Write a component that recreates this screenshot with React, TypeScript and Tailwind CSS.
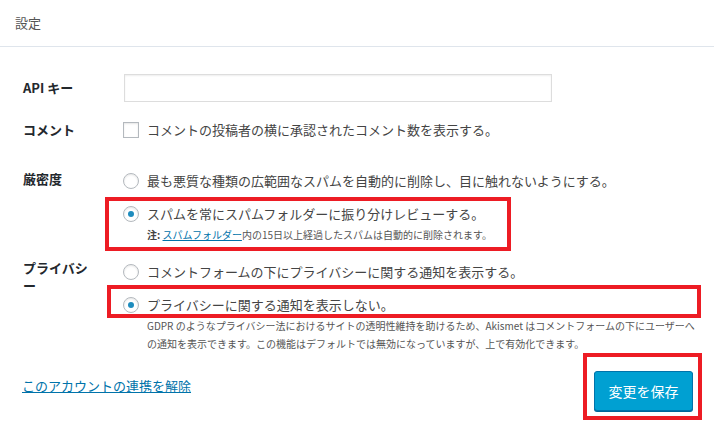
import React from "react";

const Radio = ({ checked = false }: { checked?: boolean }) => (
  <span className="w-4 h-4 shrink-0 rounded-full border border-[#b4b9be] bg-white shadow-[inset_0_1px_2px_rgba(0,0,0,0.1)] flex items-center justify-center">
    {checked && <span className="w-[6px] h-[6px] rounded-full bg-[#1e8cbe]" />}
  </span>
);

const App = () => {
  return (
    <div className="w-[714px] h-[431px] overflow-hidden bg-white text-[13px] text-[#444] font-['Noto_Sans_CJK_JP','Noto_Sans',sans-serif]">
      {/* Header */}
      <div className="h-[47px] border-b border-[#dfe5ec] px-[15px] flex items-center text-[#555]">
        設定
      </div>

      <div className="pl-[23px]">
        {/* API key */}
        <div className="flex items-center mt-[27px]">
          <div className="w-[101px] font-bold text-[#23282d]">API キー</div>
          <div className="w-[428px] h-[28px] border border-[#ddd] bg-white shadow-[inset_0_1px_2px_rgba(0,0,0,0.07)]" />
        </div>

        {/* Comment */}
        <div className="flex items-center mt-[20px] h-4">
          <div className="w-[100px] font-bold text-[#23282d]">コメント</div>
          <span className="w-4 h-4 shrink-0 border border-[#b4b9be] bg-white shadow-[inset_0_1px_2px_rgba(0,0,0,0.1)]" />
          <span className="ml-[8px] leading-4">コメントの投稿者の横に承認されたコメント数を表示する。</span>
        </div>

        {/* Strictness */}
        <div className="flex items-start mt-[35px]">
          <div className="w-[100px] font-bold text-[#23282d] leading-4 -mt-[2px]">厳密度</div>
          <div className="flex flex-col">
            <div className="flex items-center h-4">
              <Radio />
              <span className="ml-[8px] leading-4">最も悪質な種類の広範囲なスパムを自動的に削除し、目に触れないようにする。</span>
            </div>
            <div className="mt-[8px] -ml-[18px] w-[406px] border-4 border-[#ed1c24] pl-[14px] pt-[5px] pb-[5px]">
              <div className="flex items-center h-4">
                <Radio checked />
                <span className="ml-[8px] leading-4">スパムを常にスパムフォルダーに振り分けレビューする。</span>
              </div>
              <div className="mt-[6px] pl-[24px] text-[10px] leading-[14px] text-[#555]">
                <span className="font-bold text-[#444]">注:</span>{" "}
                <span className="text-[#0073aa] underline">スパムフォルダー</span>
                内の15日以上経過したスパムは自動的に削除されます。
              </div>
            </div>
          </div>
        </div>

        {/* Privacy */}
        <div className="flex items-start mt-[13px]">
          <div className="w-[100px] font-bold text-[#23282d] leading-[18px] -mt-[5px]">
            プライバシ
            <br />ー
          </div>
          <div className="flex flex-col">
            <div className="flex items-center h-4">
              <Radio />
              <span className="ml-[8px] leading-4">コメントフォームの下にプライバシーに関する通知を表示する。</span>
            </div>
            <div className="mt-[5px] -ml-[16px] w-[594px] border-4 border-[#ed1c24] pl-[12px] pt-[8px] pb-[1px]">
              <div className="flex items-center h-4">
                <Radio checked />
                <span className="ml-[8px] leading-4">プライバシーに関する通知を表示しない。</span>
              </div>
            </div>
            <div className="-mt-[1px] pl-[24px] text-[10px] leading-[18px] text-[#555] whitespace-nowrap">
              GDPR のようなプライバシー法におけるサイトの透明性維持を助けるため、Akismet はコメントフォームの下にユーザーへ
              <br />
              の通知を表示できます。この機能はデフォルトでは無効になっていますが、上で有効化できます。
            </div>
          </div>
        </div>

        {/* Footer */}
        <div className="flex items-start">
          <a className="mt-[25px] -ml-[1px] leading-4 text-[#0073aa] underline">このアカウントの連携を解除</a>
          <div className="ml-auto mr-[12px] w-[119px] h-[67px] border-4 border-[#ed1c24] pl-[7px] pt-[14px]">
            <button className="w-[99px] h-[40px] rounded-[3px] bg-[#00a0d2] border border-[#0073aa] shadow-[0_1px_0_#006799] text-white text-[14px] flex items-center justify-center">
              変更を保存
            </button>
          </div>
        </div>
      </div>
    </div>
  );
};

export default App;
